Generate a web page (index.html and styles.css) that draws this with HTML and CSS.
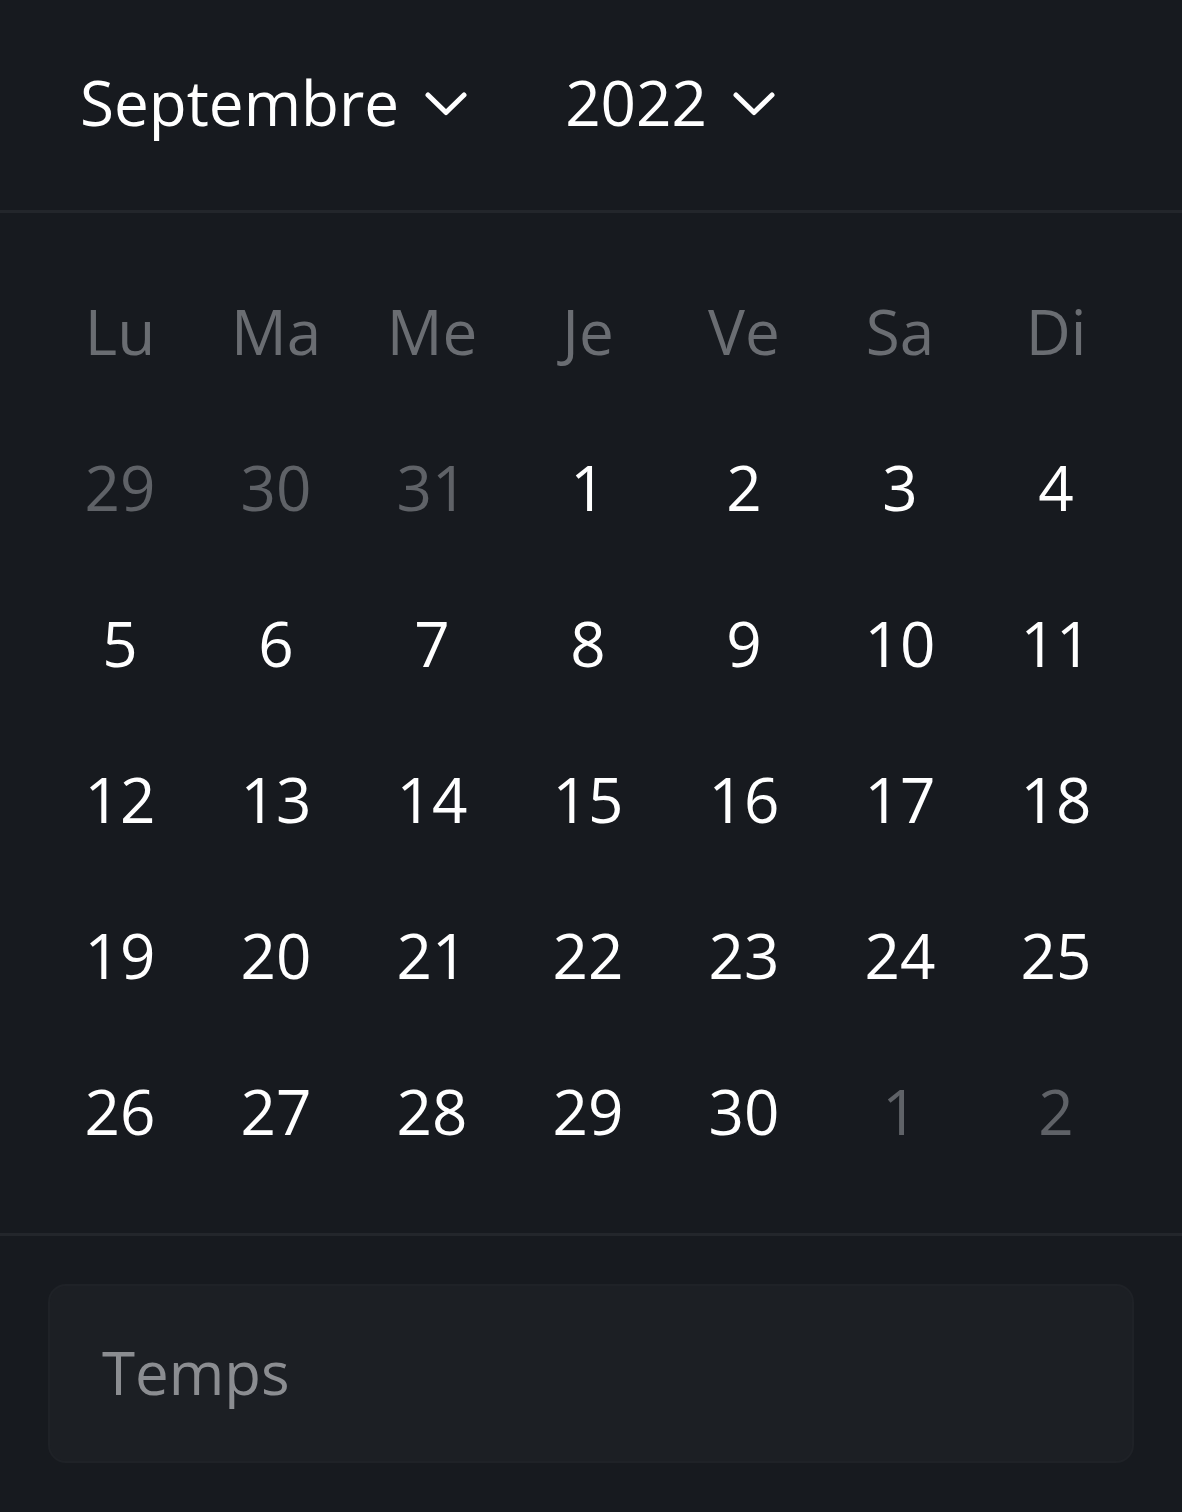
FILE: index.html
```html
<!DOCTYPE html>
<html lang="fr">
<head>
<meta charset="utf-8">
<title>Calendrier</title>
<link rel="stylesheet" href="styles.css">
</head>
<body>
<div class="picker">
  <header class="head">
    <div class="select">
      <span class="select-label">Septembre</span>
      <svg class="chev" viewBox="0 0 42 24" width="42" height="24"><polyline points="3,3 21,20.5 39,3" /></svg>
    </div>
    <div class="select">
      <span class="select-label">2022</span>
      <svg class="chev" viewBox="0 0 42 24" width="42" height="24"><polyline points="3,3 21,20.5 39,3" /></svg>
    </div>
  </header>
  <section class="cal">
    <div class="grid">
      <div class="wd">Lu</div><div class="wd">Ma</div><div class="wd">Me</div><div class="wd">Je</div><div class="wd">Ve</div><div class="wd">Sa</div><div class="wd">Di</div>
      <div class="day muted">29</div><div class="day muted">30</div><div class="day muted">31</div><div class="day">1</div><div class="day">2</div><div class="day">3</div><div class="day">4</div>
      <div class="day">5</div><div class="day">6</div><div class="day">7</div><div class="day">8</div><div class="day">9</div><div class="day">10</div><div class="day">11</div>
      <div class="day">12</div><div class="day">13</div><div class="day">14</div><div class="day">15</div><div class="day">16</div><div class="day">17</div><div class="day">18</div>
      <div class="day">19</div><div class="day">20</div><div class="day">21</div><div class="day">22</div><div class="day">23</div><div class="day">24</div><div class="day">25</div>
      <div class="day">26</div><div class="day">27</div><div class="day">28</div><div class="day">29</div><div class="day">30</div><div class="day muted">1</div><div class="day muted">2</div>
    </div>
  </section>
  <footer class="foot">
    <div class="time-field">Temps</div>
  </footer>
</div>
</body>
</html>
```
FILE: styles.css
```css
* { box-sizing: border-box; }
html, body {
  margin: 0;
  padding: 0;
  background: #171a1f;
}
body {
  font-family: "Open Sans", "Noto Sans", sans-serif;
  color: #ffffff;
}
.picker {
  width: 1182px;
  height: 1512px;
  background: #171a1f;
  display: flex;
  flex-direction: column;
}
.head {
  height: 213px;
  border-bottom: 3px solid #23262b;
  display: flex;
  align-items: center;
  padding-left: 80px;
  padding-bottom: 2px;
  gap: 98px;
}
.select {
  display: flex;
  align-items: center;
  gap: 26px;
}
.select-label {
  font-size: 62px;
  line-height: 1;
  color: #ffffff;
  padding-bottom: 5px;
}
.chev {
  display: block;
  fill: none;
  stroke: #ffffff;
  stroke-width: 5;
  stroke-linecap: round;
  stroke-linejoin: round;
}
.cal {
  padding: 42px 48px 42px 42px;
  border-bottom: 3px solid #23262b;
}
.grid {
  display: grid;
  grid-template-columns: repeat(7, 156px);
  grid-auto-rows: 156px;
}
.wd, .day {
  display: flex;
  align-items: center;
  justify-content: center;
  font-size: 62px;
  line-height: 1;
  padding-bottom: 5px;
}
.wd { color: #6a6d72; }
.day { color: #ffffff; }
.day.muted { color: #5f6267; }
.foot {
  padding: 48px 48px 0 48px;
}
.time-field {
  height: 179px;
  background: #1c1f24;
  border: 2px solid #1f2227;
  border-radius: 18px;
  display: flex;
  align-items: center;
  padding-left: 52px;
  padding-bottom: 4px;
  font-size: 60px;
  line-height: 1;
  color: #8b8d91;
}
```
